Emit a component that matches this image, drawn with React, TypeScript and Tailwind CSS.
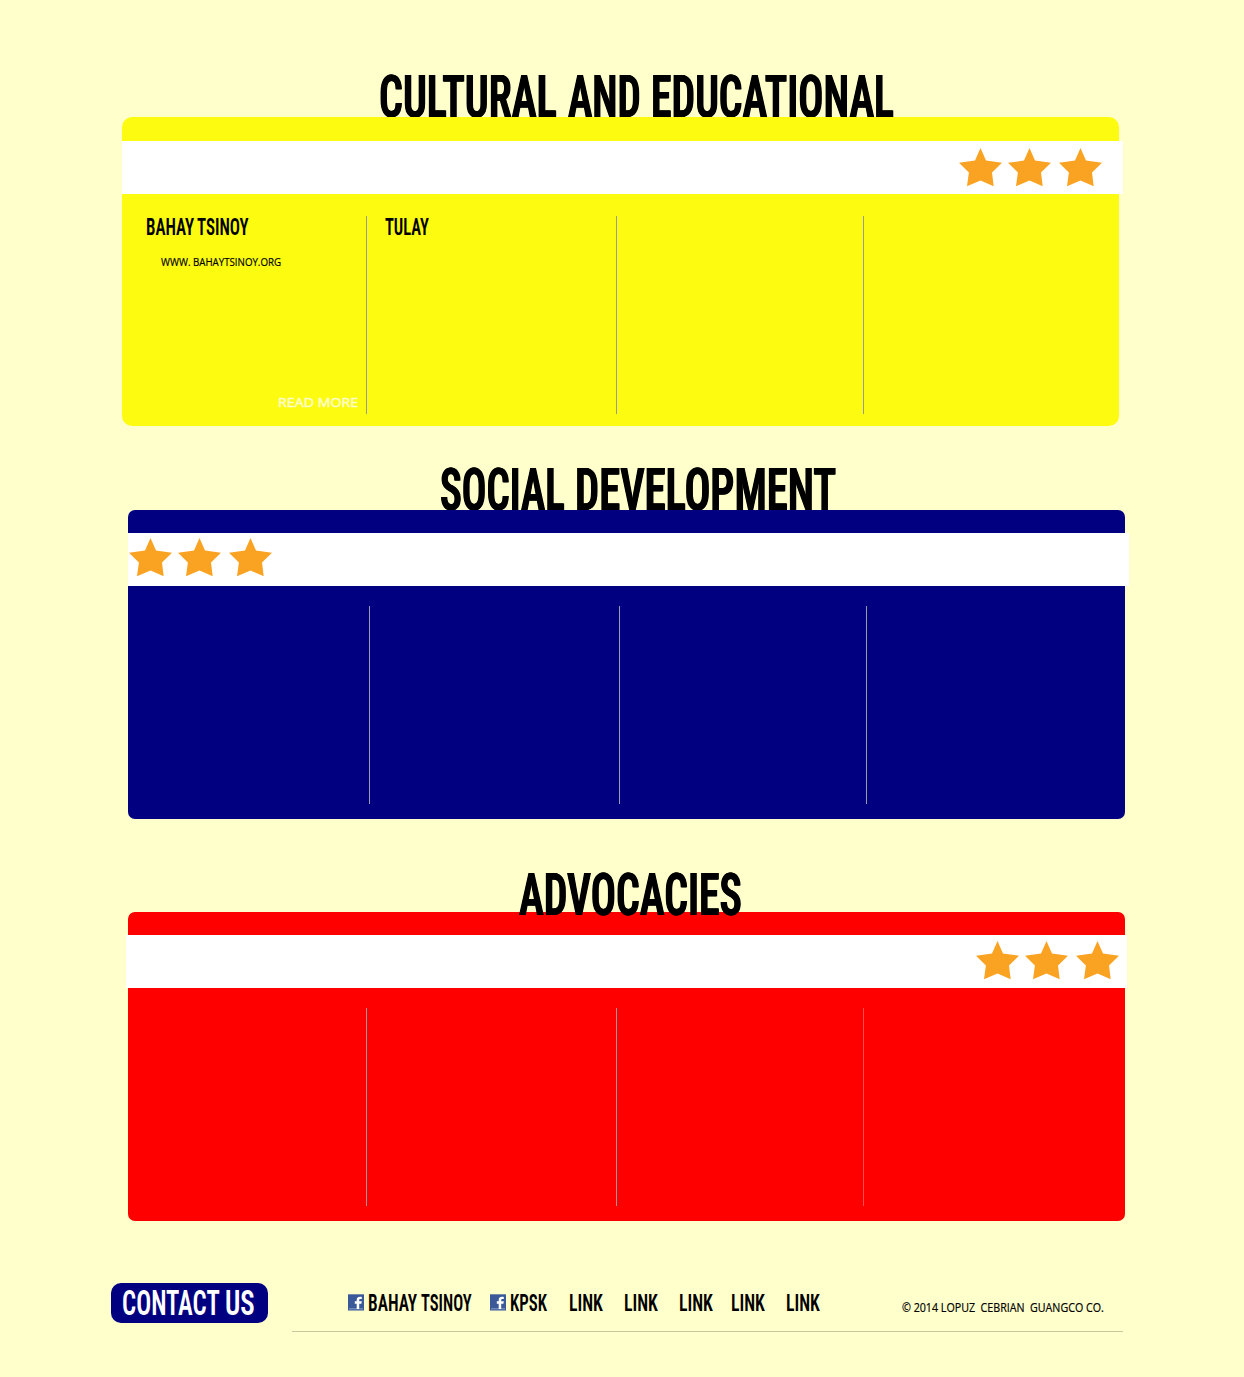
import { useLayoutEffect, useRef, useState } from "react";
import clsx from "clsx";

/** A run of text squeezed or stretched horizontally to fill its box. */
function Fit({ children, className }: { children: string; className: string }) {
  const box = useRef<HTMLSpanElement>(null);
  const text = useRef<HTMLSpanElement>(null);
  const [scale, setScale] = useState(1);
  useLayoutEffect(() => {
    if (!box.current || !text.current) return;
    setScale(box.current.clientWidth / text.current.offsetWidth);
  }, [children]);
  return (
    <span ref={box} className={clsx("block shrink-0 whitespace-pre", className)}>
      <span ref={text} className="inline-block origin-left align-top" style={{ transform: `scaleX(${scale})` }}>
        {children}
      </span>
    </span>
  );
}

const display = "font-['Roboto','Liberation_Sans',sans-serif] [font-stretch:75%]";
const heading = `${display} h-[42px] text-[58.5px] leading-[45px] font-semibold [text-shadow:0.7px_0_0_black,-0.7px_0_0_black]`;
const label = `${display} h-[18px] text-[24px] leading-[18px] font-semibold`;
const button = `${display} h-[26px] text-[35px] leading-[26px] font-semibold`;
const small = "font-['Open_Sans','Noto_Sans',sans-serif] font-medium";

function Star({ className }: { className?: string }) {
  return (
    <svg viewBox="0 0 43 39" className={clsx("h-[39px] w-[43px] shrink-0 fill-[#faa323]", className)}>
      <path d="M21.5 0L27 12.6L43 14.7L33 24.5L34.7 38.3L21.5 32.5L8 38.3L9.9 24.5L0 14.7L16 12.6Z" />
    </svg>
  );
}

function Stars({ className }: { className: string }) {
  return (
    <div className={clsx("flex", className)}>
      <Star />
      <Star className="ml-[6px]" />
      <Star className="ml-[8px]" />
    </div>
  );
}

function Facebook() {
  return (
    <svg viewBox="0 0 16 17" className="h-[17px] w-4 shrink-0">
      <rect y="0.3" width="16" height="16.2" fill="#3b5998" />
      <rect x="1" y="14.2" width="14" height="1.2" fill="#7f95c4" />
      <path d="M8.7 15V9.7H6.8V7.3H8.7V6C8.7 3.7 10 2.8 12 2.8C12.9 2.8 13.5 2.9 13.8 3V5H12.6C11.5 5 11.2 5.4 11.2 6.2V7.3H13.8L13.4 9.7H11.2V15Z" fill="#fff" />
    </svg>
  );
}

export default function App() {
  return (
    <main className="h-[1377px] w-[1244px] overflow-hidden bg-[#ffffcc] text-black">
      <section className="pt-[75px]">
        <h1 className="flex h-[42px] pl-[379px]">
          <Fit className={clsx(heading, "w-[178px]")}>CULTURAL</Fit>
          <Fit className={clsx(heading, "ml-[11px] w-[73px]")}>AND</Fit>
          <Fit className={clsx(heading, "ml-[10px] w-[243px]")}>EDUCATIONAL</Fit>
        </h1>
        <div className="relative ml-[122px] h-[309px] w-[997px] rounded-[10px] bg-[#fdfb10] pt-6">
          <div className="h-[53px] w-[1001px] bg-white pt-[7px]">
            <Stars className="pl-[837px]" />
          </div>
          <div className="mt-[22px] flex h-[198px]">
            <article className="flex w-[245px] flex-col border-r border-[#999] pt-[2px]">
              <h2 className="flex pl-6">
                <Fit className={clsx(label, "w-[48px]")}>BAHAY</Fit>
                <Fit className={clsx(label, "ml-[3px] w-[52px]")}>TSINOY</Fit>
              </h2>
              <p className="pt-[19px] pl-[39px]">
                <Fit className={clsx(small, "h-[14px] w-[120px] text-[11.5px] leading-[14px] [-webkit-text-stroke:0.2px_black]")}>WWW. BAHAYTSINOY.ORG</Fit>
              </p>
              <a className="mt-auto mb-[4px] ml-[156px] text-[#ffffcc]">
                <Fit className={clsx(small, "h-[15px] w-[80px] text-[13.5px] leading-[14px] [-webkit-text-stroke:0.5px_#ffffcc]")}>READ MORE</Fit>
              </a>
            </article>
            <article className="w-[250px] border-r border-[#999] pt-[2px] pl-[18px]">
              <h2>
                <Fit className={clsx(label, "w-[44px]")}>TULAY</Fit>
              </h2>
            </article>
            <article className="w-[247px] border-r border-[#999]" />
          </div>
        </div>
      </section>

      <section className="pt-[42px]">
        <h1 className="flex h-[42px] pl-[440px]">
          <Fit className={clsx(heading, "w-[125px]")}>SOCIAL</Fit>
          <Fit className={clsx(heading, "ml-[10px] w-[261px]")}>DEVELOPMENT</Fit>
        </h1>
        <div className="relative ml-[128px] h-[309px] w-[997px] rounded-[7px] bg-[#000080] pt-[23px]">
          <div className="h-[53px] w-[1001px] bg-white pt-[5px]">
            <Stars className="pl-px" />
          </div>
          <div className="mt-5 flex h-[198px]">
            <div className="w-[242px] border-r border-[#9999b0]" />
            <div className="w-[250px] border-r border-[#9999b0]" />
            <div className="w-[247px] border-r border-[#9999a0]" />
          </div>
        </div>
      </section>

      <section className="pt-[54px]">
        <h1 className="relative z-10 flex h-[39px] pl-[519px]">
          <Fit className={clsx(heading, "w-[223px]")}>ADVOCACIES</Fit>
        </h1>
        <div className="relative ml-[128px] h-[309px] w-[997px] rounded-[7px] bg-[#ff0000] pt-[23px]">
          <div className="-ml-[2px] h-[53px] w-[1001px] bg-white pt-[6px]">
            <Stars className="pl-[850px]" />
          </div>
          <div className="mt-5 flex h-[198px]">
            <div className="w-[239px] border-r border-[#999]" />
            <div className="w-[250px] border-r border-[#999]" />
            <div className="w-[247px] border-r border-[#ff4d4d]" />
          </div>
        </div>
      </section>

      <footer className="flex pt-[62px] pl-[111px]">
        <a className="flex h-10 w-[157px] rounded-[10px] bg-[#000080] pt-[8px] pl-[11px] text-white">
          <Fit className={clsx(button, "w-[98px]")}>CONTACT</Fit>
          <Fit className={clsx(button, "ml-[5px] w-[30px]")}>US</Fit>
        </a>
        <div className="ml-6 flex h-[49px] w-[831px] border-b border-[#c8c8a0] pt-[11px] pl-14">
          <Facebook />
          <Fit className={clsx(label, "ml-[4px] w-[49px]")}>BAHAY</Fit>
          <Fit className={clsx(label, "ml-[4px] w-[51px]")}>TSINOY</Fit>
          <div className="ml-[18px] flex">
            <Facebook />
          </div>
          <Fit className={clsx(label, "ml-[4px] w-[37px]")}>KPSK</Fit>
          <Fit className={clsx(label, "ml-[22px] w-[34px]")}>LINK</Fit>
          <Fit className={clsx(label, "ml-[21px] w-[34px]")}>LINK</Fit>
          <Fit className={clsx(label, "ml-[21px] w-[34px]")}>LINK</Fit>
          <Fit className={clsx(label, "ml-[18px] w-[34px]")}>LINK</Fit>
          <Fit className={clsx(label, "ml-[21px] w-[34px]")}>LINK</Fit>
          <Fit className={clsx(small, "mt-[7px] ml-[82px] h-[14px] w-[202px] text-[12px] leading-[14px] [-webkit-text-stroke:0.2px_black]")}>
            {"© 2014 LOPUZ  CEBRIAN  GUANGCO CO."}
          </Fit>
        </div>
      </footer>
    </main>
  );
}
